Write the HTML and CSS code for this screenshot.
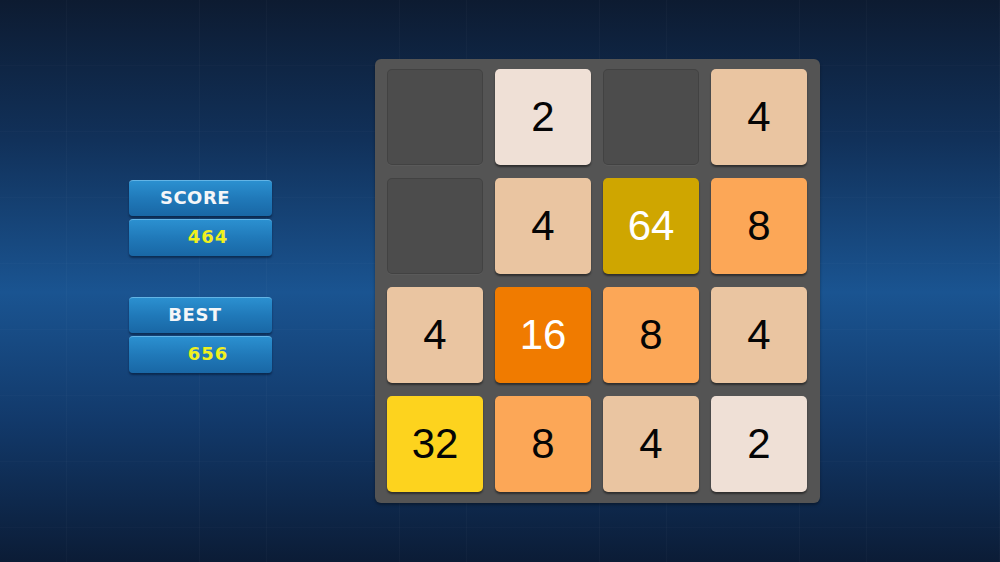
FILE: index.html
```html
<!DOCTYPE html>
<html lang="en">
<head>
    <meta charset="UTF-8">
    <meta name="viewport" content="width=device-width, initial-scale=1.0">
    <title>2048</title>
    <link rel="stylesheet" href="styles.css">
</head>
<body>
    <div class="game">
        <div class="scores">
            <div class="score-group">
                <div class="score-box score-label">SCORE</div>
                <div class="score-box score-value">464</div>
            </div>
            <div class="score-group">
                <div class="score-box score-label">BEST</div>
                <div class="score-box score-value">656</div>
            </div>
        </div>

        <div class="board">
            <div class="cell empty"></div>
            <div class="cell t2">2</div>
            <div class="cell empty"></div>
            <div class="cell t4">4</div>

            <div class="cell empty"></div>
            <div class="cell t4">4</div>
            <div class="cell t64">64</div>
            <div class="cell t8">8</div>

            <div class="cell t4">4</div>
            <div class="cell t16">16</div>
            <div class="cell t8">8</div>
            <div class="cell t4">4</div>

            <div class="cell t32">32</div>
            <div class="cell t8">8</div>
            <div class="cell t4">4</div>
            <div class="cell t2">2</div>
        </div>
    </div>
</body>
</html>
```

FILE: styles.css
```css
* {
    box-sizing: border-box;
}
html, body {
    margin: 0;
    height: 100%;
}
body {
    font-family: 'Liberation Sans', Arial, sans-serif;
    background-color: #123a68;
    background-image:
        repeating-linear-gradient(90deg, transparent 0, transparent 66px, rgba(255, 255, 255, 0.022) 66px, rgba(255, 255, 255, 0.022) 66.67px),
        repeating-linear-gradient(180deg, transparent 0, transparent 65px, rgba(255, 255, 255, 0.015) 65px, rgba(255, 255, 255, 0.015) 66px),
        linear-gradient(180deg, #0d1b31 0%, #11315a 25%, #1a5491 52%, #12396a 75%, #0b1c36 100%);
}
.game {
    display: flex;
    align-items: center;
    height: 100%;
    padding-left: 129px;
}
.scores {
    display: flex;
    flex-direction: column;
    gap: 41px;
    width: 143px;
    margin-right: 103px;
    margin-top: -10px;
}
.score-group {
    display: flex;
    flex-direction: column;
    gap: 3px;
}
.score-box {
    height: 37px;
    border-radius: 4px;
    background: linear-gradient(180deg, #2b90d0 0%, #2079b9 50%, #1967a5 100%);
    border-top: 1px solid #62b4e6;
    box-shadow: 0 2px 2px rgba(4, 20, 45, 0.55);
    font-family: 'DejaVu Sans', Verdana, sans-serif;
    font-weight: bold;
    font-size: 18px;
    line-height: 34px;
    text-align: center;
}
.score-label {
    height: 36px;
    color: #f4f6f8;
    letter-spacing: 0.5px;
    padding-right: 11px;
}
.score-value {
    color: #f0f01e;
    letter-spacing: 1px;
    padding-left: 15px;
}
.board {
    display: grid;
    grid-template-columns: repeat(4, 96px);
    grid-auto-rows: 96px;
    column-gap: 12px;
    row-gap: 13px;
    padding: 10px 12px 11px 12px;
    width: 445px;
    height: 444px;
    background-color: #545454;
    border-radius: 6px;
    box-shadow: 0 2px 3px rgba(0, 0, 0, 0.35);
}
.cell {
    border-radius: 5px;
    display: flex;
    align-items: center;
    justify-content: center;
    font-size: 42px;
    color: #050505;
    box-shadow: 0 2px 2px rgba(0, 0, 0, 0.45);
}
.empty {
    background-color: #4c4c4c;
    box-shadow: inset 0 0 0 1px rgba(0, 0, 0, 0.12), 0 1px 0 rgba(255, 255, 255, 0.04);
}
.t2 {
    background-color: #efe0d6;
}
.t4 {
    background-color: #eac5a1;
}
.t8 {
    background-color: #fca757;
}
.t16 {
    background-color: #f07b00;
    color: #ffffff;
}
.t32 {
    background-color: #fdd31e;
}
.t64 {
    background-color: #cfa600;
    color: #ffffff;
}
```
